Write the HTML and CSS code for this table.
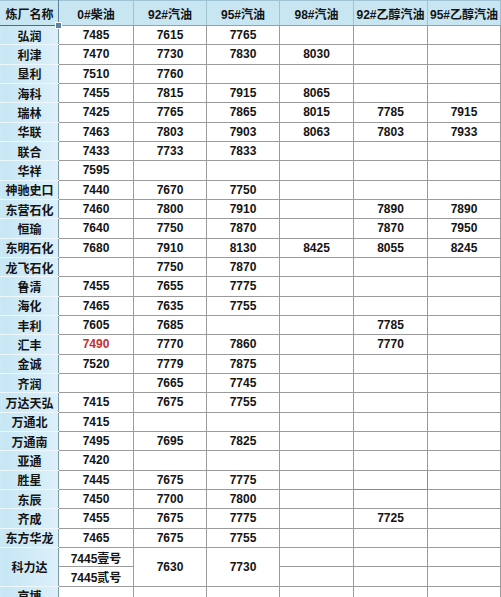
FILE: index.html
```html
<!DOCTYPE html>
<html>
<head>
<meta charset="utf-8">
<link rel="stylesheet" href="styles.css">
</head>
<body>
<table class="sheet">
<colgroup>
<col class="c-name"><col class="c-a"><col class="c-b"><col class="c-b"><col class="c-c"><col class="c-c"><col class="c-b">
</colgroup>
<thead>
<tr class="hdr">
<th class="name-h"><span class="sel-text">炼厂名称</span><span class="handle"></span></th>
<th>0#柴油</th><th>92#汽油</th><th>95#汽油</th><th>98#汽油</th><th>92#乙醇汽油</th><th>95#乙醇汽油</th>
</tr>
</thead>
<tbody>
<tr><td class="name">弘润</td><td>7485</td><td>7615</td><td>7765</td><td></td><td></td><td></td></tr>
<tr><td class="name">利津</td><td>7470</td><td>7730</td><td>7830</td><td>8030</td><td></td><td></td></tr>
<tr><td class="name">垦利</td><td>7510</td><td>7760</td><td></td><td></td><td></td><td></td></tr>
<tr><td class="name">海科</td><td>7455</td><td>7815</td><td>7915</td><td>8065</td><td></td><td></td></tr>
<tr><td class="name">瑞林</td><td>7425</td><td>7765</td><td>7865</td><td>8015</td><td>7785</td><td>7915</td></tr>
<tr><td class="name">华联</td><td>7463</td><td>7803</td><td>7903</td><td>8063</td><td>7803</td><td>7933</td></tr>
<tr><td class="name">联合</td><td>7433</td><td>7733</td><td>7833</td><td></td><td></td><td></td></tr>
<tr><td class="name">华祥</td><td>7595</td><td></td><td></td><td></td><td></td><td></td></tr>
<tr><td class="name">神驰史口</td><td>7440</td><td>7670</td><td>7750</td><td></td><td></td><td></td></tr>
<tr><td class="name">东营石化</td><td>7460</td><td>7800</td><td>7910</td><td></td><td>7890</td><td>7890</td></tr>
<tr><td class="name">恒瑜</td><td>7640</td><td>7750</td><td>7870</td><td></td><td>7870</td><td>7950</td></tr>
<tr><td class="name">东明石化</td><td>7680</td><td>7910</td><td>8130</td><td>8425</td><td>8055</td><td>8245</td></tr>
<tr><td class="name">龙飞石化</td><td></td><td>7750</td><td>7870</td><td></td><td></td><td></td></tr>
<tr><td class="name">鲁清</td><td>7455</td><td>7655</td><td>7775</td><td></td><td></td><td></td></tr>
<tr><td class="name">海化</td><td>7465</td><td>7635</td><td>7755</td><td></td><td></td><td></td></tr>
<tr><td class="name">丰利</td><td>7605</td><td>7685</td><td></td><td></td><td>7785</td><td></td></tr>
<tr><td class="name">汇丰</td><td class="red">7490</td><td>7770</td><td>7860</td><td></td><td>7770</td><td></td></tr>
<tr><td class="name">金诚</td><td>7520</td><td>7779</td><td>7875</td><td></td><td></td><td></td></tr>
<tr><td class="name">齐润</td><td></td><td>7665</td><td>7745</td><td></td><td></td><td></td></tr>
<tr><td class="name">万达天弘</td><td>7415</td><td>7675</td><td>7755</td><td></td><td></td><td></td></tr>
<tr><td class="name">万通北</td><td>7415</td><td></td><td></td><td></td><td></td><td></td></tr>
<tr><td class="name">万通南</td><td>7495</td><td>7695</td><td>7825</td><td></td><td></td><td></td></tr>
<tr><td class="name">亚通</td><td>7420</td><td></td><td></td><td></td><td></td><td></td></tr>
<tr><td class="name">胜星</td><td>7445</td><td>7675</td><td>7775</td><td></td><td class="picked"></td><td></td></tr>
<tr><td class="name">东辰</td><td>7450</td><td>7700</td><td>7800</td><td></td><td></td><td></td></tr>
<tr><td class="name">齐成</td><td>7455</td><td>7675</td><td>7775</td><td></td><td>7725</td><td></td></tr>
<tr><td class="name">东方华龙</td><td>7465</td><td>7675</td><td>7755</td><td></td><td></td><td></td></tr>
<tr><td class="name" rowspan="2">科力达</td><td>7445壹号</td><td rowspan="2">7630</td><td rowspan="2">7730</td><td></td><td></td><td></td></tr>
<tr><td>7445贰号</td><td></td><td></td><td></td></tr>
<tr><td class="name">京博</td><td></td><td></td><td></td><td></td><td></td><td></td></tr>
</tbody>
</table>
</body>
</html>
```
FILE: styles.css
```css
html, body {
  margin: 0;
  padding: 0;
  background: #ffffff;
  overflow: hidden;
}

.sheet {
  border-collapse: collapse;
  table-layout: fixed;
  width: 501px;
  font-family: "Liberation Sans", "Noto Sans CJK SC", sans-serif;
  font-size: 12px;
  font-weight: bold;
  color: #141414;
}

.c-name { width: 58px; }
.c-a { width: 75px; }
.c-b { width: 73px; }
.c-c { width: 74px; }

.sheet th,
.sheet td {
  padding: 0;
  text-align: center;
  vertical-align: middle;
  border: 1px solid #9b9b9b;
  white-space: nowrap;
  overflow: hidden;
}

.hdr { height: 25px; }

.sheet th {
  background: #c8e5f2;
  border-color: #9fc3d3;
  border-bottom-color: #8fa3ad;
  font-weight: bold;
  font-size: 12px;
}

.sheet th.name-h {
  position: relative;
  overflow: visible;
  border-left-color: #c8e5f2;
  border-right-color: #5a7e9c;
  border-bottom: 1px solid #3f6f9f;
}

.handle {
  position: absolute;
  right: -4px;
  bottom: -4px;
  width: 5px;
  height: 5px;
  background: #5d7fa0;
  border: 1px solid #ffffff;
  z-index: 2;
}

tbody tr { height: 19.33px; }

.sheet td.name {
  background: linear-gradient(to right, #c6e6f4, #dcf0f9);
  border-left-color: #c6e6f4;
  border-top-color: #eef7fb;
  border-bottom-color: #eef7fb;
  border-right-color: #7f9aa8;
}

.sheet td.red { color: #c42f2c; }

.sheet td.picked {
  border: 1px solid #a27a93;
}
```
